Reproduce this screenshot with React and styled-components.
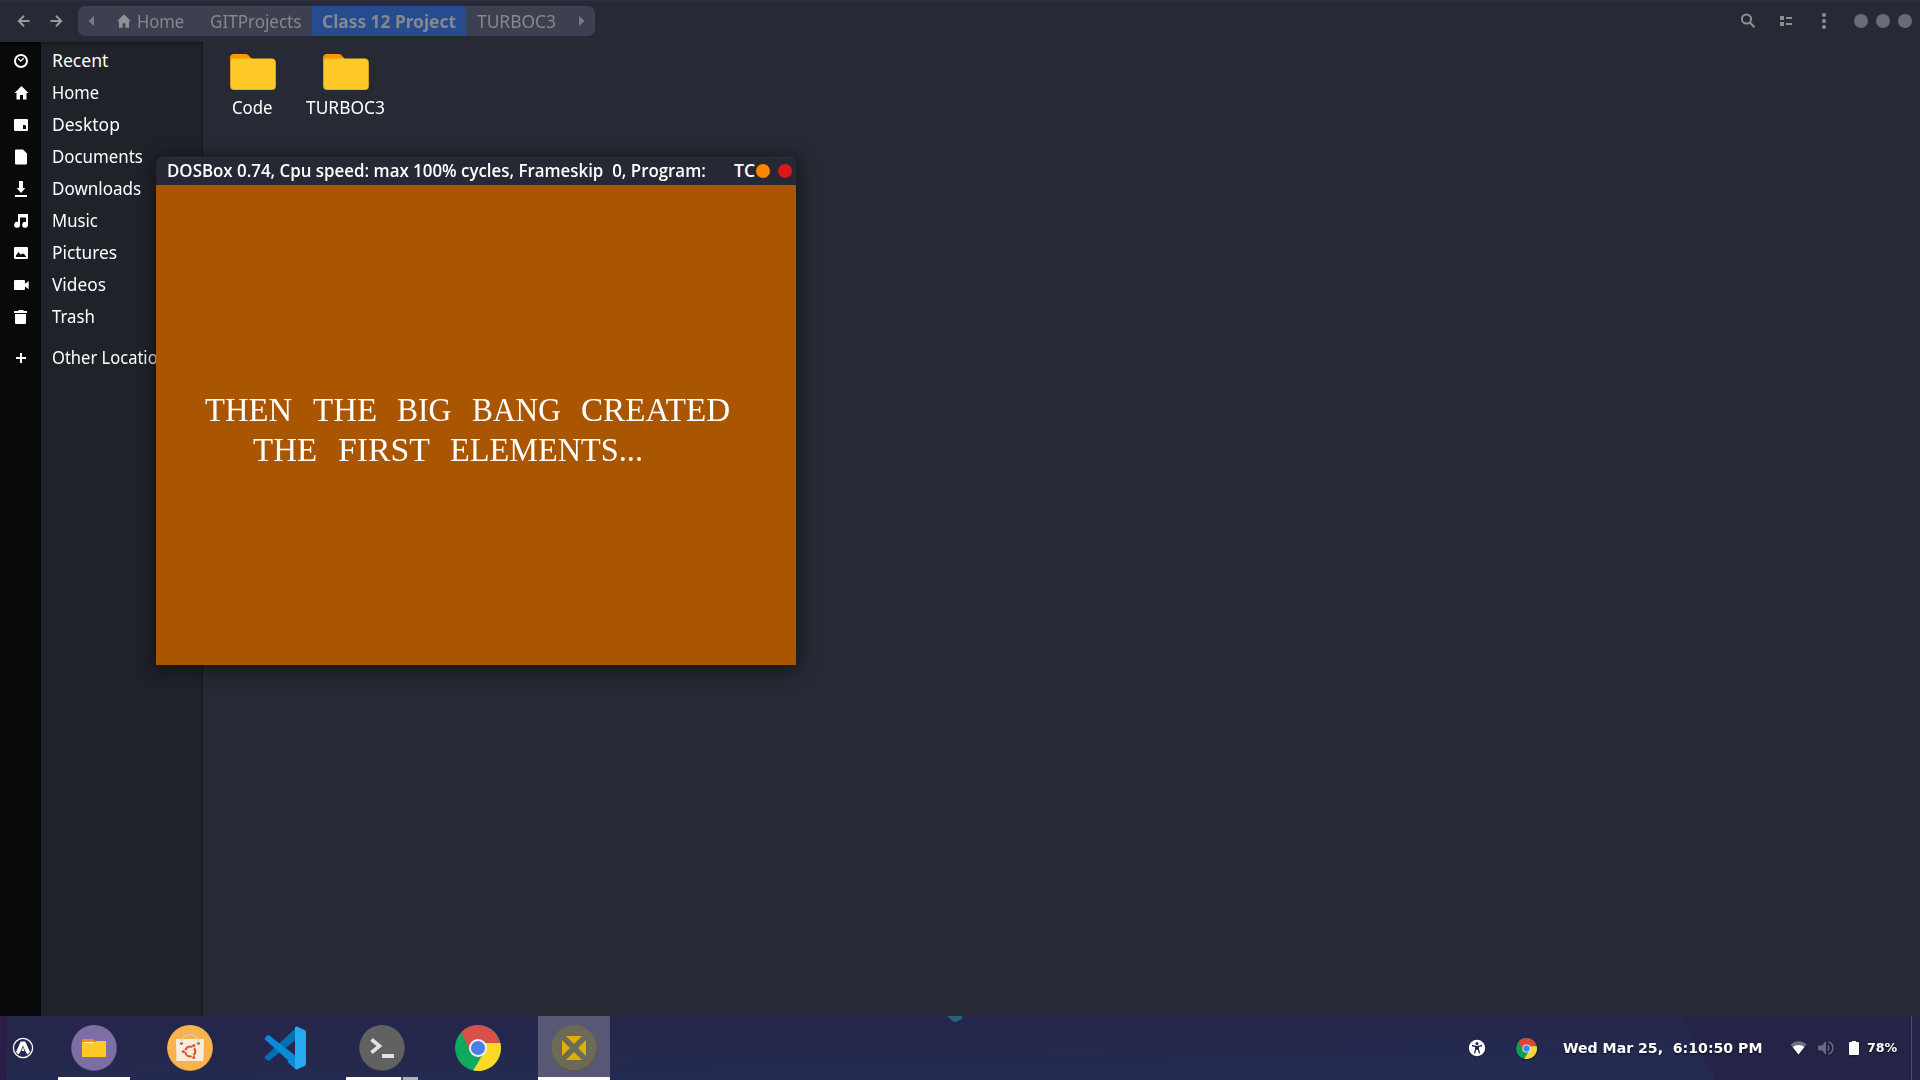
import React, { useLayoutEffect, useRef, useState } from 'react';
import styled, { createGlobalStyle } from 'styled-components';

const Global = createGlobalStyle`
  * { box-sizing: border-box; }
  body { margin: 0; overflow: hidden; background: #272934; }
  svg { display: block; flex: none; }
`;

const Desktop = styled.div`
  position: relative;
  display: flex;
  flex-direction: column;
  width: 1920px;
  height: 1080px;
  overflow: hidden;
  font-family: 'Noto Sans', 'Open Sans', sans-serif;
  font-size: 17.6px;
  color: #fff;
`;

const FitBox = styled.span`
  display: block;
  flex: none;
  width: ${(p) => p.$w}px;
  white-space: pre;
`;
const FitInner = styled.span`
  display: inline-block;
  transform-origin: 0 50%;
`;

/* Condenses or widens a label so that it fills exactly the given width. */
function Fit({ w, children }) {
  const ref = useRef(null);
  const [scale, setScale] = useState(1);
  useLayoutEffect(() => {
    if (ref.current) setScale(w / ref.current.offsetWidth);
  }, [w, children]);
  return (
    <FitBox $w={w}>
      <FitInner ref={ref} style={{ transform: `scaleX(${scale})` }}>{children}</FitInner>
    </FitBox>
  );
}

/* ---------- file manager ---------- */
const FileManager = styled.div`
  display: flex;
  flex-direction: column;
  height: 1016px;
  background: #272934;
`;
const Header = styled.header`
  display: flex;
  align-items: center;
  height: 42px;
  padding: 0 8px 1px 17px;
  border-top: 1px solid #2f323e;
  color: #87888d;
`;
const NavButtons = styled.div`
  display: flex;
  gap: 18px;
  width: 61px;
`;
const PathBar = styled.nav`
  display: flex;
  width: 517px;
  height: 30px;
  border-radius: 7px;
  overflow: hidden;
  background: #3d4050;
`;
const Crumb = styled.div`
  display: flex;
  align-items: center;
  width: ${(p) => p.$w}px;
  padding-left: ${(p) => p.$pad}px;
  line-height: 28px;
  padding-bottom: 1px;
  font-weight: ${(p) => (p.$active ? 700 : 400)};
  background: ${(p) => (p.$active ? '#274b8f' : 'transparent')};
`;
const HeaderTools = styled.div`
  display: flex;
  align-items: center;
  margin-left: auto;
`;
const ToolIcon = styled.div`
  width: 38px;
  display: flex;
  justify-content: center;
`;
const WindowDots = styled.div`
  display: flex;
  gap: 8px;
  margin-left: 11px;
`;
const Dot = styled.i`
  width: 14px;
  height: 14px;
  border-radius: 50%;
  background: ${(p) => p.$c};
`;
const Body = styled.div`
  display: flex;
  flex: 1;
`;
const Sidebar = styled.aside`
  width: 203px;
  padding-top: 3px;
  border-right: 1px solid #16181c;
  background: linear-gradient(90deg, #08090b 41px, #1f2228 41px);
  box-shadow: inset 0 3px 4px -2px rgba(0, 0, 0, 0.45);
`;
const Place = styled.div`
  display: flex;
  align-items: center;
  height: 32px;
  margin-top: ${(p) => p.$top || 0}px;
`;
const PlaceLabel = styled.div`
  height: 32px;
  line-height: 30px;
`;
const PlaceIcon = styled.div`
  width: 52px;
  padding-left: 13px;
`;
const Files = styled.main`
  display: flex;
  padding: 12px 0 0 3px;
`;
const FolderItem = styled.div`
  display: flex;
  flex-direction: column;
  align-items: center;
  width: 93px;
  line-height: 24px;
  gap: 5px;
`;

/* ---------- DOSBox ---------- */
const DosWindow = styled.section`
  position: absolute;
  left: 156px;
  top: 157px;
  width: 640px;
  border-radius: 7px 7px 0 0;
  box-shadow: 0 3px 18px 2px rgba(8, 9, 10, 0.6);
`;
const DosTitle = styled.div`
  display: flex;
  align-items: center;
  height: 28px;
  padding: 0 0 1px 11px;
  border-radius: 7px 7px 0 0;
  border-top: 1px solid #30333e;
  background: #262833;
  font-family: 'Open Sans', 'Noto Sans', sans-serif;
  font-weight: 600;
  font-size: 17.6px;
`;
const TitleText = styled.div`
  height: 26px;
  line-height: 24px;
`;
const TitleGap = styled.span`
  width: ${(p) => p.$w}px;
`;
const DosScreen = styled.div`
  height: 480px;
  padding-top: 204px;
  background: #aa5500;
`;
const DosLine = styled.div`
  display: flex;
  gap: 20.6px;
  height: 40px;
  padding-left: ${(p) => p.$x}px;
  font-family: 'Liberation Serif', serif;
  font-size: 34.5px;
  line-height: 40px;
`;

/* ---------- taskbar ---------- */
const Taskbar = styled.footer`
  position: relative;
  display: flex;
  height: 64px;
  background: linear-gradient(179deg, #25264c 0%, #25264c 35%, #242b50 70%, #242b50 100%);
`;
const Wallpaper = styled.svg`
  position: absolute;
  left: 0;
  top: 0;
`;
const Launchers = styled.div`
  position: relative;
  display: flex;
  align-items: center;
`;
const Menu = styled.div`
  width: 46px;
  display: flex;
  justify-content: center;
`;
const Task = styled.div`
  display: flex;
  flex-direction: column;
  align-items: center;
  justify-content: space-between;
  width: 72px;
  height: 64px;
  margin-left: ${(p) => (p.$first ? 12 : 24)}px;
  padding-top: 9px;
  background: ${(p) => (p.$active ? '#585874' : 'transparent')};
`;
const Running = styled.div`
  display: flex;
  width: 72px;
  height: 3px;
`;
const Mark = styled.i`
  width: ${(p) => p.$w}px;
  background: ${(p) => p.$c || '#fff'};
`;
const Tray = styled.div`
  position: relative;
  display: flex;
  align-items: center;
  margin-left: auto;
  width: 452px;
  font-family: 'DejaVu Sans', sans-serif;
  font-weight: 700;
  text-shadow: 0 1px 2px rgba(0, 0, 0, 0.7);
`;
const TrayCell = styled.div`
  width: ${(p) => p.$w}px;
  filter: drop-shadow(0 1px 1px rgba(0, 0, 0, 0.35));
`;
const Clock = styled.div`
  width: 227px;
  font-size: 13.4px;
`;
const Percent = styled.div`
  width: 44px;
  font-size: 11.4px;
`;
const ShowDesktop = styled.div`
  width: 9px;
  height: 64px;
  border-left: 1px solid #4a4b6c;
`;

const Home = ({ size = 14, color = '#fff' }) => (
  <svg width={size} height={size} viewBox="0 0 14 14" fill={color}>
    <path d="M7 .3 0 7.3h2V13.7h3.6V9.2h2.8v4.5H12V7.3h2z" />
  </svg>
);

const icons = {
  recent: (
    <svg width="16" height="16" viewBox="0 0 16 16" fill="none" stroke="#fff">
      <circle cx="8" cy="8" r="6" strokeWidth="2" />
      <path d="M5 5.5 7.7 8.2 10.8 5.2" strokeWidth="1.3" />
    </svg>
  ),
  home: (
    <svg width="16" height="16" viewBox="0 0 16 16" fill="#fff">
      <path d="M8.5 1 1.5 8h2v6.5H7V10h3v4.5h3.5V8h2z" />
    </svg>
  ),
  desktop: (
    <svg width="16" height="16" viewBox="0 0 16 16">
      <rect x="1" y="2" width="14" height="12" rx="1" fill="#fff" />
      <path d="M10 8h2l1 1v3h-3z" fill="#08090b" />
    </svg>
  ),
  documents: (
    <svg width="16" height="16" viewBox="0 0 16 16" fill="#fff">
      <path d="M3 .5h7l4 4v10a1 1 0 0 1-1 1H3a1 1 0 0 1-1-1v-13a1 1 0 0 1 1-1z" />
    </svg>
  ),
  downloads: (
    <svg width="16" height="16" viewBox="0 0 16 16" fill="#fff">
      <path d="M6 0h4v7h2.3L8 12 3.7 7H6zM2 14h12v2H2z" />
    </svg>
  ),
  music: (
    <svg width="16" height="16" viewBox="0 0 16 16" fill="#fff">
      <path d="M5 1h10v10.8a2.9 2.9 0 1 1-2-2.7V4.5H7v7.3a2.9 2.9 0 1 1-2-2.7z" />
    </svg>
  ),
  pictures: (
    <svg width="16" height="16" viewBox="0 0 16 16">
      <rect x="1" y="2" width="14" height="12" rx="1.2" fill="#fff" />
      <path d="M3 12V10.5L5.5 7l2.3 2.7L9.5 8.5 11 9l2 2.5v.5z" fill="#08090b" />
    </svg>
  ),
  videos: (
    <svg width="16" height="16" viewBox="0 0 16 16" fill="#fff">
      <path d="M2 3h9a1 1 0 0 1 1 1v2.7L15.7 4v8.3L12 9.5V12a1 1 0 0 1-1 1H2a1 1 0 0 1-1-1V4a1 1 0 0 1 1-1z" />
    </svg>
  ),
  trash: (
    <svg width="16" height="16" viewBox="0 0 16 16" fill="#fff">
      <path d="M1 2h4l1-1h4l1 1h3v2H1zM2 5h11v9a1 1 0 0 1-1 1H3a1 1 0 0 1-1-1z" />
    </svg>
  ),
  plus: (
    <svg width="16" height="16" viewBox="0 0 16 16" fill="#fff">
      <path d="M7 3h2v4h4v2H9v4H7V9H3V7h4z" />
    </svg>
  ),
};

const places = [
  ['recent', 'Recent', 56],
  ['home', 'Home', 47],
  ['desktop', 'Desktop', 67.5],
  ['documents', 'Documents', 91],
  ['downloads', 'Downloads', 89],
  ['music', 'Music', 45.5],
  ['pictures', 'Pictures', 65],
  ['videos', 'Videos', 54],
  ['trash', 'Trash', 43],
  ['plus', 'Other Locations', 124],
];

const Folder = () => (
  <svg width="46" height="36" viewBox="0 0 46 36">
    <path d="M0 4a4 4 0 0 1 4-4h11.5a4 4 0 0 1 2.7 1L22 5v8H0z" fill="#ff9800" />
    <rect x="0" y="5" width="46" height="31" rx="4" fill="#c8952a" />
    <rect x=".8" y="4.6" width="44.4" height="31" rx="3.6" fill="#ffca28" />
  </svg>
);

const Arrow = ({ flip }) => (
  <svg width="14" height="14" viewBox="0 0 14 14" fill="none" stroke="#96979b" strokeWidth="2">
    <path d={flip ? 'M1.5 7H12M7 1.8 12.2 7 7 12.2' : 'M12.5 7H2M7 1.8 1.8 7 7 12.2'} />
  </svg>
);

const Chrome = ({ size, soft }) => {
  const [r, g, y, b] = soft
    ? ['#d8504a', '#10a960', '#fcd925', '#4a80e8']
    : ['#e04438', '#139c58', '#fdd23c', '#4285f4'];
  return (
    <svg width={size} height={size} viewBox="0 0 46 46">
      <circle cx="23" cy="23" r="23" fill={g} />
      <path d="M6.2 7.3A23 23 0 0 1 45.2 18H23L14.5 25z" fill={r} />
      <path d="M23 18h22.4A23 23 0 0 1 18.2 45.5L28 29z" fill={y} />
      <circle cx="23" cy="23" r="9" fill="#f4f4f4" />
      <circle cx="23" cy="23" r="7.1" fill={b} />
    </svg>
  );
};

const FilesApp = () => (
  <svg width="46" height="46" viewBox="0 0 46 46">
    <circle cx="23" cy="23.2" r="22.8" fill="#5f5489" />
    <circle cx="23" cy="22.7" r="22.6" fill="#7d6ea5" />
    <path d="M11 15a1 1 0 0 1 1-1h10l2 2v4H11z" fill="#ff8f00" />
    <path d="M11 17h13l1-1h10v16H11z" fill="#ffca28" />
    <path d="M13 17.5h10" stroke="#fff3cf" />
  </svg>
);

const StoreApp = () => (
  <svg width="46" height="46" viewBox="0 0 46 46">
    <circle cx="23" cy="23.2" r="22.8" fill="#cf8d3c" />
    <circle cx="23" cy="22.7" r="22.6" fill="#f8b24e" />
    <path d="M9 14h28l-.6 22H9.4z" fill="#f8ecdf" />
    <circle cx="14.5" cy="18.3" r="1.6" fill="#8a7a60" />
    <circle cx="31.5" cy="18.3" r="1.6" fill="#8a7a60" />
    <path d="M14.5 18C14.5 6.500 31.500 6.500 31.500 18" fill="none" stroke="#d8ccae" strokeWidth="1.4" />
    <circle cx="23.3" cy="26.5" r="5" fill="none" stroke="#e2562c" strokeWidth="2.2" strokeDasharray="8.6 1.87" strokeDashoffset="4.3" />
    <circle cx="16.3" cy="26.5" r="1.6" fill="#e2562c" />
    <circle cx="26.8" cy="20.5" r="1.6" fill="#e2562c" />
    <circle cx="26.8" cy="32.5" r="1.6" fill="#e2562c" />
  </svg>
);

const CodeApp = () => (
  <svg width="46" height="46" viewBox="0 0 46 46">
    <path d="M34 2 2 31.5c-.6.6-.6 1.2 0 1.8l2.600 2.300c.6.4 1.200.4 1.800 0L34 14z" fill="#0070b3" />
    <path d="M34 43.500 2 14.500c-.6-.6-.6-1.200 0-1.800l2.600-2.300c.6-.4 1.200-.4 1.800 0L34 32z" fill="#0a8ad8" />
    <path d="M32 2.200c.8-.8 1.500-.9 2.500-.4l7 3.300c1 .5 1.500 1.200 1.500 2.400v31c0 1.200-.5 1.900-1.500 2.400l-7 3.300c-1 .5-1.700.2-2.500-.5z" fill="#25a9f1" />
    <path d="M32 30.500v13.200L24.500 37z" fill="#0a8ad8" />
  </svg>
);

const TerminalApp = () => (
  <svg width="46" height="46" viewBox="0 0 46 46">
    <circle cx="23" cy="23.2" r="22.8" fill="#484848" />
    <circle cx="23" cy="22.7" r="22.6" fill="#616161" />
    <path d="m12.500 14.500 8 6.500-8 6.500" fill="none" stroke="#e2e2e2" strokeWidth="3.6" />
    <rect x="23" y="29" width="12" height="4" fill="#e2e2e2" />
  </svg>
);

const DosApp = () => (
  <svg width="46" height="46" viewBox="0 0 46 46">
    <circle cx="23" cy="23.2" r="22.8" fill="#59583f" />
    <circle cx="23" cy="22.7" r="22.6" fill="#6c6a56" />
    <path d="M15 11h16l-8 8zM15 35h16l-8-8zM11 15v16l8-8zM35 15v16l-8-8z" fill="#ddb104" />
  </svg>
);

const MenuLogo = () => (
  <svg width="22" height="22" viewBox="0 0 22 22">
    <circle cx="11" cy="11" r="9.6" fill="none" stroke="#fff" strokeWidth="1.3" />
    <path d="M8.700 4.500h4.600L18 15l-2.500 2.500-2.300-3.500L11 8.500 8.500 14.500l-2 3L4 15z" fill="#fff" />
    <path d="m11 10 1.300 4h-2.600z" fill="#fff" />
  </svg>
);

export default function App() {
  return (
    <Desktop>
      <Global />
      <FileManager>
        <Header>
          <NavButtons>
            <Arrow />
            <Arrow flip />
          </NavButtons>
          <PathBar>
            <Crumb $w={39} $pad={10}>
              <svg width="6" height="12" viewBox="0 0 6 12" fill="#7b7c83"><path d="M6 1v10L.5 6z" /></svg>
            </Crumb>
            <Crumb $w={93} $pad={0}>
              <Home color="#8f9094" />
              <TitleGap $w={6} />
              <Fit w={47}>Home</Fit>
            </Crumb>
            <Crumb $w={102} $pad={0}><Fit w={91}>GITProjects</Fit></Crumb>
            <Crumb $w={154} $pad={10} $active><Fit w={134}>Class 12 Project</Fit></Crumb>
            <Crumb $w={113} $pad={11}><Fit w={79}>TURBOC3</Fit></Crumb>
            <Crumb $w={16} $pad={0}>
              <svg width="6" height="12" viewBox="0 0 6 12" fill="#7b7c83"><path d="M0 1v10L5.500 6z" /></svg>
            </Crumb>
          </PathBar>
          <HeaderTools>
            <ToolIcon>
              <svg width="16" height="16" viewBox="0 0 16 16" fill="none" stroke="#8d8e92">
                <circle cx="6.5" cy="6" r="4.6" strokeWidth="2" />
                <path d="m9.800 9.500 4.700 4.800" strokeWidth="2.2" />
              </svg>
            </ToolIcon>
            <ToolIcon>
              <svg width="14" height="12" viewBox="0 0 14 12" fill="#8d8e92">
                <path d="M1 1h4v4H1zM7 2h6v2H7zM1 7h4v4H1zM7 8h6v2H7z" />
              </svg>
            </ToolIcon>
            <ToolIcon>
              <svg width="6" height="18" viewBox="0 0 6 18" fill="#8d8e92">
                <circle cx="3" cy="3" r="2.1" /><circle cx="3" cy="9" r="2.1" /><circle cx="3" cy="15" r="2.1" />
              </svg>
            </ToolIcon>
            <WindowDots>
              <Dot $c="#6a6c75" /><Dot $c="#6a6c75" /><Dot $c="#6a6c75" />
            </WindowDots>
          </HeaderTools>
        </Header>
        <Body>
          <Sidebar>
            {places.map(([icon, label, w]) => (
              <Place key={label} $top={icon === 'plus' ? 9 : 0}>
                <PlaceIcon>{icons[icon]}</PlaceIcon>
                <PlaceLabel><Fit w={w}>{label}</Fit></PlaceLabel>
              </Place>
            ))}
          </Sidebar>
          <Files>
            <FolderItem><Folder /><Fit w={41}>Code</Fit></FolderItem>
            <FolderItem><Folder /><Fit w={79}>TURBOC3</Fit></FolderItem>
          </Files>
        </Body>
      </FileManager>

      <DosWindow>
        <DosTitle>
          <TitleText><Fit w={539}>DOSBox 0.74, Cpu speed: max 100% cycles, Frameskip  0, Program:</Fit></TitleText>
          <TitleGap $w={28} />
          <TitleText><Fit w={21}>TC</Fit></TitleText>
          <TitleGap $w={1} />
          <Dot $c="#ff8400" />
          <TitleGap $w={8} />
          <Dot $c="#d61a1a" />
        </DosTitle>
        <DosScreen>
          <DosLine $x={49}>
            <Fit w={87}>THEN</Fit><Fit w={64}>THE</Fit><Fit w={54}>BIG</Fit><Fit w={89}>BANG</Fit><Fit w={149}>CREATED</Fit>
          </DosLine>
          <DosLine $x={97}>
            <Fit w={64}>THE</Fit><Fit w={92}>FIRST</Fit><Fit w={193}>ELEMENTS...</Fit>
          </DosLine>
        </DosScreen>
      </DosWindow>

      <Taskbar>
        <Wallpaper width="1920" height="64" viewBox="0 0 1920 64">
          <rect width="7" height="64" fill="#2a1d48" />
          <path d="M1682 0H1920V64H1715z" fill="#252446" />
          <path d="M947 0h15v3l-6 3h-2z" fill="#22647b" />
        </Wallpaper>
        <Launchers>
          <Menu><MenuLogo /></Menu>
          <Task $first><FilesApp /><Running><Mark $w={72} /></Running></Task>
          <Task><StoreApp /><Running /></Task>
          <Task><CodeApp /><Running /></Task>
          <Task>
            <TerminalApp />
            <Running><Mark $w={55} /><Mark $w={2} $c="#55556a" /><Mark $w={15} $c="#b4b2b2" /></Running>
          </Task>
          <Task><Chrome size={46} soft /><Running /></Task>
          <Task $active><DosApp /><Running><Mark $w={72} /></Running></Task>
        </Launchers>
        <Tray>
          <TrayCell $w={48}>
            <svg width="18" height="18" viewBox="0 0 18 18">
              <circle cx="9" cy="9" r="8.2" fill="#fff" />
              <circle cx="9" cy="4.4" r="1.5" fill="#24284d" />
              <path d="M4 6.500 7.700 7.500V10L6.500 14.300M14 6.500 10.300 7.500V10l1.200 4.300" fill="none" stroke="#24284d" strokeWidth="1.3" />
              <path d="M7.500 6.800h3v4h-3z" fill="#24284d" />
            </svg>
          </TrayCell>
          <TrayCell $w={47}><Chrome size={21} /></TrayCell>
          <Clock><Fit w={199}>Wed Mar 25,  6:10:50 PM</Fit></Clock>
          <TrayCell $w={28}>
            <svg width="17" height="16" viewBox="0 0 17 16">
              <path d="M.5 4.500C5 0 12 0 16.500 4.500L8.500 14.500z" fill="#6f6f8a" />
              <path d="M2.600 7C6 4.200 11 4.200 14.400 7L8.500 14.500z" fill="#fff" />
            </svg>
          </TrayCell>
          <TrayCell $w={31}>
            <svg width="16" height="16" viewBox="0 0 16 16">
              <path d="M0 5.500h4L8 1v14L4 10.500H0z" fill="#6b6b85" />
              <path d="M9.500 5.500a3 3 0 0 1 0 5M10.500 2a6.300 6.300 0 0 1 0 12" fill="none" stroke="#6b6b85" strokeWidth="1.5" />
            </svg>
          </TrayCell>
          <TrayCell $w={18}>
            <svg width="10" height="14" viewBox="0 0 10 14" fill="#fff">
              <path d="M3 0h4v1h2a1 1 0 0 1 1 1v11a1 1 0 0 1-1 1H1a1 1 0 0 1-1-1V2a1 1 0 0 1 1-1h2z" />
            </svg>
          </TrayCell>
          <Percent><Fit w={30}>78%</Fit></Percent>
          <ShowDesktop />
        </Tray>
      </Taskbar>
    </Desktop>
  );
}
